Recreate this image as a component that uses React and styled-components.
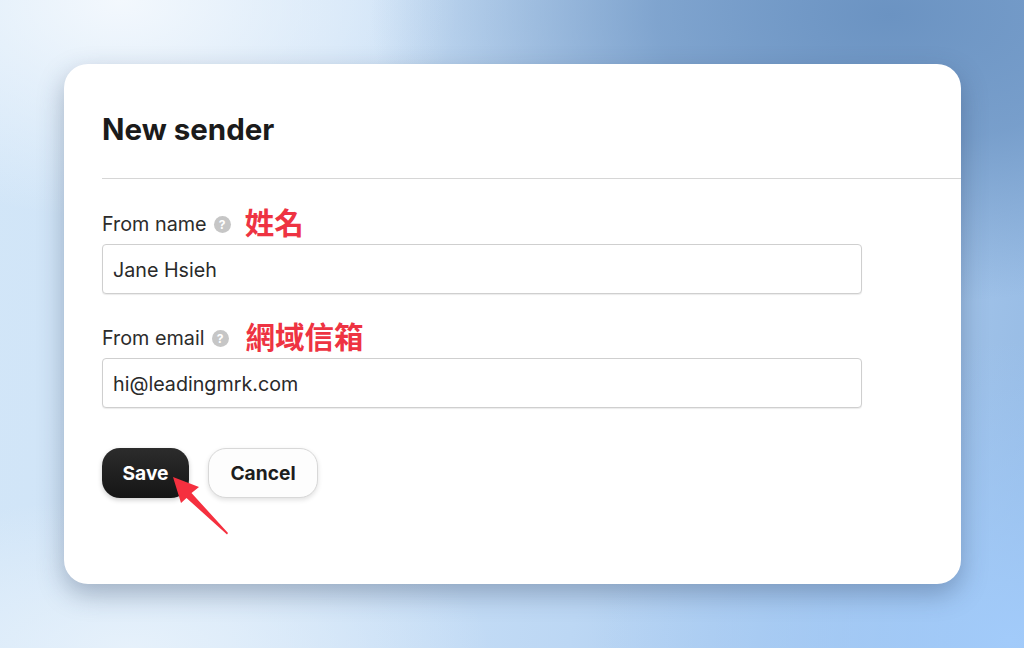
import React from 'react'
import styled, { createGlobalStyle } from 'styled-components'

const GlobalStyle = createGlobalStyle`
  html, body {
    margin: 0;
    padding: 0;
  }
  * {
    box-sizing: border-box;
  }
`

function HelpDot() {
  return <Help>?</Help>
}

function Field({ label, note, noteGap, value }) {
  return (
    <FieldBox>
      <LabelRow>
        <Label>{label}</Label>
        <HelpDot />
        <Note $gap={noteGap}>{note}</Note>
      </LabelRow>
      <Input readOnly value={value} />
    </FieldBox>
  )
}

export default function App() {
  return (
    <Page>
      <GlobalStyle />
      <Card>
        <Header>
          <Title>New sender</Title>
        </Header>
        <Form>
          <Field label="From name" note="姓名" noteGap={14} value="Jane Hsieh" />
          <Field label="From email" note="網域信箱" noteGap={17} value="hi@leadingmrk.com" />
          <Buttons>
            <SaveButton>Save</SaveButton>
            <CancelButton>Cancel</CancelButton>
            <Arrow viewBox="0 0 60 62" aria-hidden="true">
              <path d="M1 1 L27 11 L19.5 17 L56 57 L55 58.5 L14.5 22 L9 27 Z" fill="#f5303f" />
            </Arrow>
          </Buttons>
        </Form>
      </Card>
    </Page>
  )
}

const Page = styled.div`
  width: 1024px;
  height: 648px;
  padding: 64px 63px 64px 64px;
  overflow: hidden;
  font-family: Inter, "Noto Sans CJK TC", sans-serif;
  background:
    radial-gradient(ellipse 520px 290px at 890px 15px, #6b93c2 0%, rgba(107, 147, 194, 0.75) 45%, rgba(107, 147, 194, 0) 100%),
    radial-gradient(ellipse 420px 300px at 1010px 640px, #a2cbfa 0%, rgba(162, 203, 250, 0) 100%),
    radial-gradient(ellipse 340px 220px at 120px 0px, #f3f8fd 0%, rgba(243, 248, 253, 0) 100%),
    radial-gradient(ellipse 360px 150px at 130px 648px, #e6f1fb 0%, rgba(230, 241, 251, 0) 100%),
    linear-gradient(100deg, #d2e6f8 0%, #cfe3f7 30%, #bcd7f4 60%, #95bae4 100%);
`

const Card = styled.div`
  height: 520px;
  background: #fff;
  border-radius: 24px;
  box-shadow: 0 10px 26px rgba(40, 60, 90, 0.34);
  overflow: hidden;
`

const Header = styled.div`
  height: 115px;
  margin-left: 38px;
  padding-top: 48px;
  border-bottom: 1px solid #d6d6d6;
`

const Title = styled.h1`
  margin: 0;
  font-size: 29.5px;
  line-height: 34px;
  font-weight: 700;
  color: #1b1b1b;
`

const Form = styled.div`
  display: flex;
  flex-direction: column;
  gap: 24px;
  width: 798px;
  padding: 25px 0 0 38px;
`

const FieldBox = styled.div`
  display: flex;
  flex-direction: column;
  gap: 4px;
`

const LabelRow = styled.div`
  display: flex;
  align-items: center;
  height: 36px;
`

const Label = styled.span`
  margin-top: 3px;
  font-size: 19.8px;
  color: #2c2c2c;
`

const Help = styled.span`
  display: flex;
  align-items: center;
  justify-content: center;
  width: 17px;
  height: 17px;
  margin: 5px 0 0 7px;
  border-radius: 50%;
  background: #c6c6c6;
  color: #fff;
  font-size: 12px;
  font-weight: 700;
`

const Note = styled.span`
  margin: -3px 0 0 ${props => props.$gap}px;
  font-family: "Noto Sans CJK TC", sans-serif;
  font-size: 29.5px;
  line-height: 36px;
  font-weight: 600;
  color: #ee3342;
`

const Input = styled.input`
  width: 100%;
  height: 50px;
  padding: 1px 10px 0;
  border: 1px solid #cfcfcf;
  border-radius: 4px;
  background: #fff;
  box-shadow: 0 1px 1px rgba(0, 0, 0, 0.08);
  font-family: Inter, sans-serif;
  font-size: 19.7px;
  color: #2a2a2a;
  outline: none;
`

const Buttons = styled.div`
  position: relative;
  display: flex;
  gap: 19px;
  margin-top: 16px;
`

const SaveButton = styled.button`
  width: 87px;
  height: 50px;
  border: none;
  border-radius: 18px;
  background: linear-gradient(#2c2c2c, #151515);
  box-shadow: 0 2px 5px rgba(0, 0, 0, 0.2);
  font-family: Inter, sans-serif;
  font-size: 19.2px;
  font-weight: 700;
  color: #fff;
`

const CancelButton = styled.button`
  width: 110px;
  height: 50px;
  border: 1px solid #d8d8d8;
  border-radius: 18px;
  background: #fdfdfd;
  box-shadow: 0 2px 5px rgba(0, 0, 0, 0.12);
  font-family: Inter, sans-serif;
  font-size: 19.2px;
  font-weight: 700;
  color: #1d1d1d;
`

const Arrow = styled.svg`
  position: absolute;
  left: 70px;
  top: 28px;
  width: 60px;
  height: 62px;
`
